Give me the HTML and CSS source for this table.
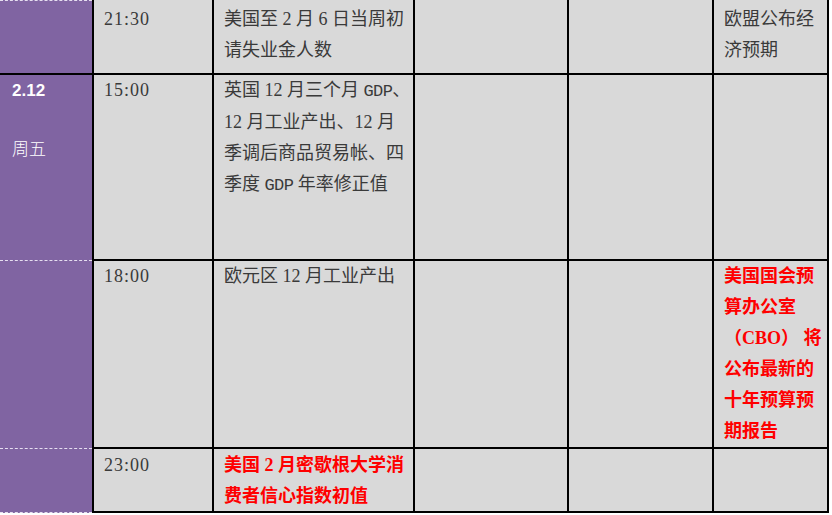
FILE: index.html
```html
<!DOCTYPE html>
<html lang="zh-CN">
<head>
<meta charset="utf-8">
<title>财经日历</title>
<link rel="stylesheet" href="styles.css">
</head>
<body>
<div class="sheet">
  <div class="cell date first"></div>
  <div class="cell time"><span class="t">21:30</span></div>
  <div class="cell ev">美国至 2 月 6 日当周初<br>请失业金人数</div>
  <div class="cell ev"></div>
  <div class="cell ev"></div>
  <div class="cell ev">欧盟公布经<br>济预期</div>

  <div class="cell date"><div class="day">2.12</div><div class="wk">周五</div></div>
  <div class="cell time r"><span class="t">15:00</span></div>
  <div class="cell ev r">英国 12 月三个月 <span class="m">GDP</span>、<br>12 月工业产出、12 月<br>季调后商品贸易帐、四<br>季度 <span class="m">GDP</span> 年率修正值</div>
  <div class="cell ev r"></div>
  <div class="cell ev r"></div>
  <div class="cell ev r"></div>

  <div class="cell date"></div>
  <div class="cell time r"><span class="t">18:00</span></div>
  <div class="cell ev r">欧元区 12 月工业产出</div>
  <div class="cell ev r"></div>
  <div class="cell ev r"></div>
  <div class="cell ev r hot">美国国会预<br>算办公室<br>（CBO） 将<br>公布最新的<br>十年预算预<br>期报告</div>

  <div class="cell date"></div>
  <div class="cell time r4"><span class="t">23:00</span></div>
  <div class="cell ev r4 hot">美国 2 月密歇根大学消<br>费者信心指数初值</div>
  <div class="cell ev r4"></div>
  <div class="cell ev r4"></div>
  <div class="cell ev r4"></div>
</div>
</body>
</html>
```

FILE: styles.css
```css
html, body {
  margin: 0;
  padding: 0;
  background: #ffffff;
}

.sheet {
  display: grid;
  grid-template-columns: 92px 122px 201px 154px 145px 115px;
  grid-template-rows: 75px 186px 188px 64px;
  width: 829px;
  font-family: "Liberation Serif", "Noto Sans CJK SC", serif;
  font-size: 18px;
  line-height: 31px;
  color: #3a3a3a;
}

.cell {
  box-sizing: border-box;
  background: #d9d9d9;
  border-right: 2px solid #000;
  border-bottom: 2px solid #000;
  padding: 4px 0 0 10px;
  white-space: nowrap;
  overflow: hidden;
}

.cell.r {
  padding-top: 0;
}

.cell.r4 {
  padding-top: 1px;
}

.time {
  border-left: 2px solid #000;
}

.t {
  letter-spacing: 1px;
}

.m {
  font-family: "Liberation Mono", monospace;
  font-size: 17px;
  letter-spacing: -0.6px;
}

.date {
  background: #8064a2;
  border-right: none;
  border-bottom: 1px dashed #e6dff0;
  padding: 0 0 0 12px;
  color: #ffffff;
}

.date.first {
  border-top: 1px dashed #e6dff0;
  border-bottom: 2px solid #000;
}

.day {
  font-family: "Liberation Sans", Arial, sans-serif;
  font-weight: 700;
  font-size: 17px;
  line-height: 31px;
}

.wk {
  font-family: "Noto Sans CJK SC", sans-serif;
  font-size: 17px;
  line-height: 30px;
  margin-top: 27px;
  font-weight: 300;
}

.hot {
  color: #ff0000;
  font-weight: 700;
}
```
